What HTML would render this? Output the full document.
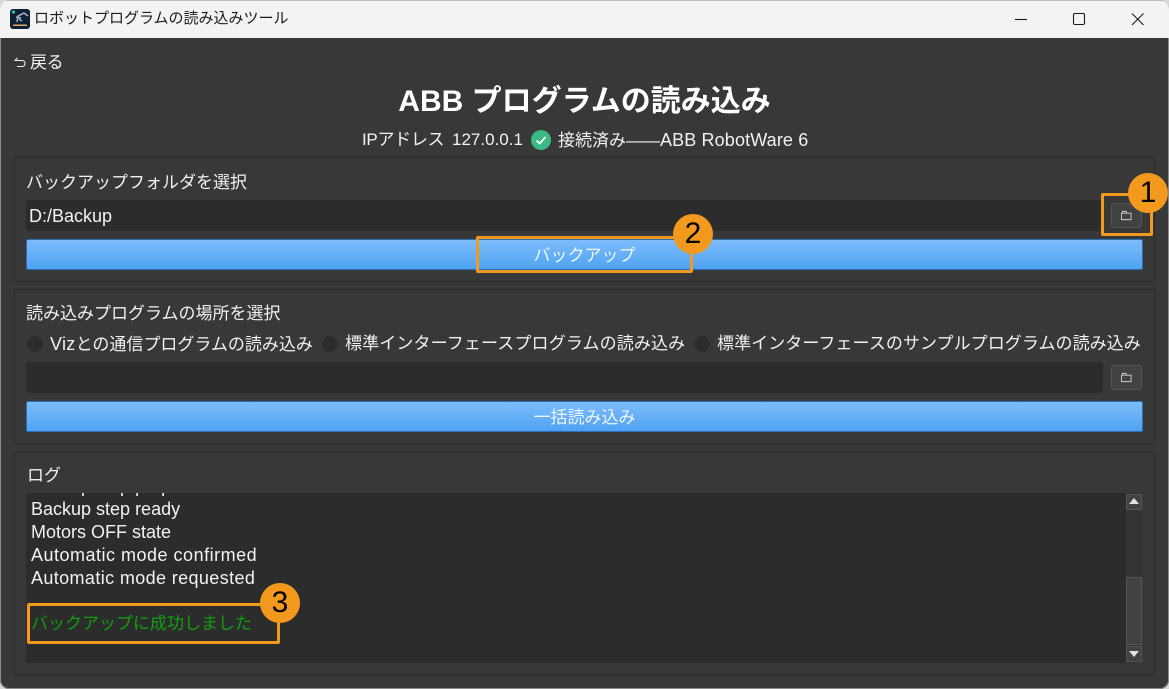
<!DOCTYPE html>
<html lang="ja"><head><meta charset="utf-8"><style>
html,body{margin:0;padding:0;width:1169px;height:689px;overflow:hidden;background:#d8d8d8}
body{position:relative;font-family:"Liberation Sans","Noto Sans CJK JP",sans-serif;color:#f2f2f2}
.a{position:absolute;white-space:nowrap}
.panel{position:absolute;left:14px;width:1141px;border:1px solid #2b2b2b;box-sizing:border-box;background:#383838}
.edit{position:absolute;background:#2c2c2c;border-radius:3px}
.blue{position:absolute;left:26px;width:1117px;height:31px;box-sizing:border-box;border:1px solid #2a6fb5;border-radius:2px;background:linear-gradient(#7dbcfb,#4fa3f2);text-align:center;color:#eef6fe;font-size:17px;line-height:31px}
.fb{position:absolute;left:1111px;width:31px;height:25px;box-sizing:border-box;background:#424242;border:1px solid #555;border-radius:3px}
.fb svg{position:absolute;left:9px;top:6px}
.radio{position:absolute;width:16px;height:16px;border-radius:50%;background:#2c2c2c}
.t16{font-size:17px;line-height:22px}
.log{font-size:18px;line-height:23px;left:31px}
.or{position:absolute;box-sizing:border-box;border:3px solid #f39a1e;border-radius:2px}
.c{position:absolute;width:40px;height:40px;border-radius:50%;background:#f39a1e;color:#000;font-size:30px;line-height:40px;text-align:center}
</style></head><body>
<div class="a" style="left:0;top:0;width:1169px;height:689px;background:#383838;border-radius:9px;overflow:hidden;box-shadow:inset 0 0 0 1px #8a8a8a">
<div class="a" style="left:0;top:0;width:1169px;height:38px;background:#f3f3f3;border-top:1px solid #bdbdbd;box-sizing:border-box"></div>

<svg class="a" style="left:10px;top:9px" width="20" height="20" viewBox="0 0 20 20"><rect width="20" height="20" rx="3" fill="#0e2036"/><circle cx="3.5" cy="3" r="1.6" fill="#25c7a5"/><path d="M7 13 L8 7 L14 4 L18 7 M6 8 L11 9 M9 10 L12 12" stroke="#a9b1ba" stroke-width="1.6" fill="none"/><rect x="3" y="15.5" width="14" height="1.5" fill="#e8a868"/></svg>
<div class="a" style="left:34px;top:8px;font-size:15px;line-height:21px;color:#1a1a1a">ロボットプログラムの読み込みツール</div>

<svg class="a" style="left:1010px;top:8px" width="150" height="24" viewBox="0 0 150 24" fill="none" stroke="#1a1a1a" stroke-width="1.1"><path d="M5 11.5H17"/><rect x="63.5" y="5.5" width="11" height="11" rx="1.5"/><path d="M122 5.5L133.5 17M133.5 5.5L122 17"/></svg>

<svg class="a" style="left:14px;top:57px" width="13" height="12" viewBox="0 0 13 12" fill="none" stroke="#f2f2f2" stroke-width="1.1"><path d="M3.5 1L1 3.5H8C10 3.500 11 5 11 6.500S10 9.500 8 9.500H3"/></svg>
<div class="a t16" style="left:30px;top:52px;letter-spacing:-.4px">戻る</div>

<div class="a" style="left:0;width:1169px;top:83px;text-align:center;font-size:30px;line-height:38px;font-weight:bold;color:#fff">ABB プログラムの読み込み</div>

<div class="a t16" style="left:362px;top:129px;letter-spacing:-.3px">IPアドレス</div>
<div class="a t16" style="left:452px;top:129px">127.0.0.1</div>
<svg class="a" style="left:531px;top:130px" width="20" height="20" viewBox="0 0 20 20"><circle cx="10" cy="10" r="10" fill="#3dba84"/><path d="M5.500 10.500L8.700 13.500L14.500 7" stroke="#fff" stroke-width="1.7" fill="none"/></svg>
<div class="a t16" style="left:558px;top:129px">接続済み——<span style="font-size:18px;letter-spacing:.13px">ABB RobotWare 6</span></div>

<div class="panel" style="top:157px;height:125px"></div>
<div class="a t16" style="left:26px;top:172px">バックアップフォルダを選択</div>
<div class="edit" style="left:26px;top:200px;width:1077px;height:31px"></div>
<div class="a" style="left:29px;top:205px;font-size:18px;line-height:23px">D:/Backup</div>
<div class="fb" style="top:203px"><svg width="11" height="11" viewBox="0 0 12 12" fill="none" stroke="#d0d0d0"><path d="M1.500 3V1.500H5.500L6.500 3M.5 3.500H11V10.500H.5Z"/></svg></div>
<div class="blue" style="top:239px">バックアップ</div>

<div class="panel" style="top:289px;height:155px"></div>
<div class="a t16" style="left:26px;top:303px">読み込みプログラムの場所を選択</div>
<div class="radio" style="left:27px;top:336px"></div>
<div class="a t16" style="left:50px;top:333px"><span style="font-size:18px;letter-spacing:.3px">Viz</span>との通信プログラムの読み込み</div>
<div class="radio" style="left:322px;top:336px"></div>
<div class="a t16" style="left:345px;top:333px;letter-spacing:.13px">標準インターフェースプログラムの読み込み</div>
<div class="radio" style="left:694px;top:336px"></div>
<div class="a t16" style="left:717px;top:333px;letter-spacing:.07px">標準インターフェースのサンプルプログラムの読み込み</div>
<div class="edit" style="left:26px;top:362px;width:1077px;height:31px"></div>
<div class="fb" style="top:365px"><svg width="11" height="11" viewBox="0 0 12 12" fill="none" stroke="#d0d0d0"><path d="M1.500 3V1.500H5.500L6.500 3M.5 3.500H11V10.500H.5Z"/></svg></div>
<div class="blue" style="top:401px">一括読み込み</div>

<div class="panel" style="top:451px;height:224px"></div>
<div class="a t16" style="left:27px;top:465px">ログ</div>
<div class="a" style="left:26px;top:493px;width:1116px;height:170px;background:#2c2c2c;overflow:hidden"></div>
<div class="a" style="left:26px;top:493px;width:1100px;height:170px;overflow:hidden">
<div class="a log" style="left:5px;top:-18px">Backup step prepared</div>
<div class="a log" style="left:5px;top:5px">Backup step ready</div>
<div class="a log" style="left:5px;top:28px">Motors OFF state</div>
<div class="a log" style="left:5px;top:51px;letter-spacing:.5px">Automatic mode confirmed</div>
<div class="a log" style="left:5px;top:74px;letter-spacing:.38px">Automatic mode requested</div>
<div class="a" style="left:5px;top:119px;font-size:17px;line-height:23px;color:#0fa00f">バックアップに成功しました</div>
</div>

<div class="a" style="left:1126px;top:493px;width:16px;height:170px;background:#333"></div>
<div class="a" style="left:1126px;top:494px;width:16px;height:16px;background:#424242;box-sizing:border-box;border:1px solid #555"></div>
<svg class="a" style="left:1129px;top:498px" width="10" height="7"><path d="M5 0L10 6H0Z" fill="#e0e0e0"/></svg>
<div class="a" style="left:1126px;top:577px;width:16px;height:68px;background:#424242;box-sizing:border-box;border:1px solid #555"></div>
<div class="a" style="left:1126px;top:646px;width:16px;height:16px;background:#424242;box-sizing:border-box;border:1px solid #555"></div>
<svg class="a" style="left:1129px;top:651px" width="10" height="7"><path d="M0 0H10L5 6Z" fill="#e0e0e0"/></svg>

<div class="or" style="left:1101px;top:193px;width:52px;height:43px"></div>
<div class="c" style="left:1128px;top:173px">1</div>
<div class="or" style="left:476px;top:236px;width:217px;height:37px"></div>
<div class="c" style="left:673px;top:214px">2</div>
<div class="or" style="left:27px;top:603px;width:253px;height:41px"></div>
<div class="c" style="left:260px;top:583px">3</div>
</div>
</body></html>
